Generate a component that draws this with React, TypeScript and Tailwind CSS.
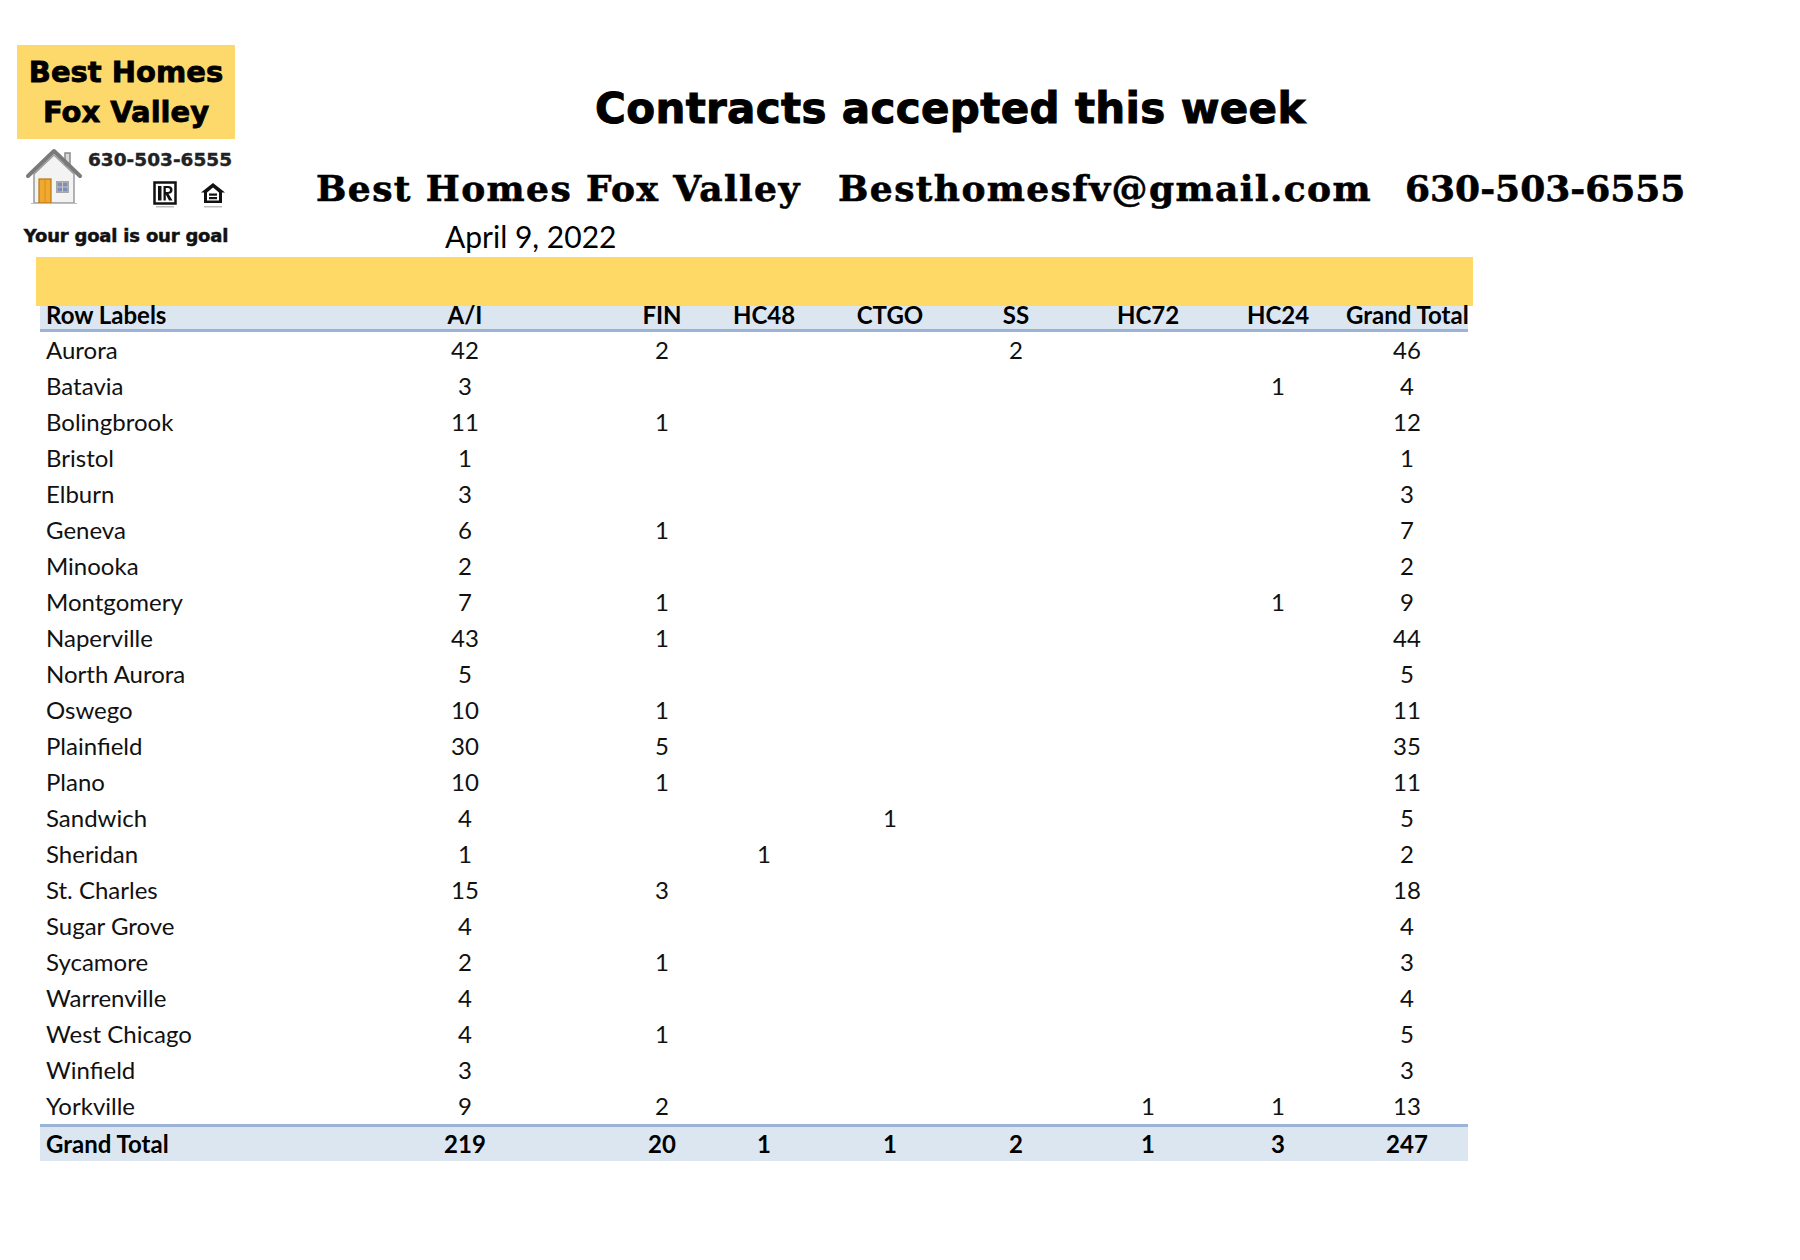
import React from "react"

const columns = ["A/I", "FIN", "HC48", "CTGO", "SS", "HC72", "HC24", "Grand Total"]

// label, A/I, FIN, HC48, CTGO, SS, HC72, HC24, Grand Total
const rows: [string, ...(number | null)[]][] = [
  ["Aurora", 42, 2, null, null, 2, null, null, 46],
  ["Batavia", 3, null, null, null, null, null, 1, 4],
  ["Bolingbrook", 11, 1, null, null, null, null, null, 12],
  ["Bristol", 1, null, null, null, null, null, null, 1],
  ["Elburn", 3, null, null, null, null, null, null, 3],
  ["Geneva", 6, 1, null, null, null, null, null, 7],
  ["Minooka", 2, null, null, null, null, null, null, 2],
  ["Montgomery", 7, 1, null, null, null, null, 1, 9],
  ["Naperville", 43, 1, null, null, null, null, null, 44],
  ["North Aurora", 5, null, null, null, null, null, null, 5],
  ["Oswego", 10, 1, null, null, null, null, null, 11],
  ["Plainfield", 30, 5, null, null, null, null, null, 35],
  ["Plano", 10, 1, null, null, null, null, null, 11],
  ["Sandwich", 4, null, null, 1, null, null, null, 5],
  ["Sheridan", 1, null, 1, null, null, null, null, 2],
  ["St. Charles", 15, 3, null, null, null, null, null, 18],
  ["Sugar Grove", 4, null, null, null, null, null, null, 4],
  ["Sycamore", 2, 1, null, null, null, null, null, 3],
  ["Warrenville", 4, null, null, null, null, null, null, 4],
  ["West Chicago", 4, 1, null, null, null, null, null, 5],
  ["Winfield", 3, null, null, null, null, null, null, 3],
  ["Yorkville", 9, 2, null, null, null, 1, 1, 13],
]

const totals = [219, 20, 1, 1, 2, 1, 3, 247]

const gridCols = "grid grid-cols-[260px_330px_64px_140px_112px_140px_124px_136px_122px]"

function HouseIcon() {
  return (
    <svg width="58" height="58" viewBox="0 0 58 58">
      {/* chimney */}
      <rect x="40" y="6" width="5" height="12" fill="#d9d9d9" stroke="#8a8a8a" strokeWidth="1.5" />
      {/* walls */}
      <path d="M9 27 L29 8 L49 27 V56 H9 Z" fill="#f3f3f3" stroke="#9a9a9a" strokeWidth="1.5" />
      {/* roof */}
      <path d="M3 29 L29 4 L55 29" fill="none" stroke="#7a7a7a" strokeWidth="4" strokeLinejoin="round" strokeLinecap="round" />
      {/* door */}
      <rect x="14" y="32" width="12" height="24" fill="#f0a92e" stroke="#b77712" strokeWidth="1.2" />
      <line x1="20" y1="33" x2="20" y2="55" stroke="#d88e1c" strokeWidth="1" />
      {/* window */}
      <rect x="32" y="35" width="11" height="10" fill="#7d8fb8" stroke="#a7a7a7" strokeWidth="2" />
      <line x1="37.5" y1="35" x2="37.5" y2="45" stroke="#c8c8c8" strokeWidth="1" />
      <line x1="32" y1="40" x2="43" y2="40" stroke="#c8c8c8" strokeWidth="1" />
      <line x1="6" y1="56.5" x2="52" y2="56.5" stroke="#bdbdbd" strokeWidth="1" />
    </svg>
  )
}

function RealtorIcon() {
  return (
    <svg width="26" height="28" viewBox="0 0 26 28">
      <rect x="1.5" y="1.5" width="21" height="21" fill="#fff" stroke="#111" strokeWidth="2.5" />
      <rect x="5" y="5" width="3.5" height="14.5" fill="#111" />
      <path d="M10.5 5 H15 Q19.5 5 19.5 9 Q19.5 12.5 15.5 12.8 L19.5 19.5 H16 L12.8 13.5 V19.5 H10.5 Z" fill="#111" />
      <path d="M12.8 7 V11 H15 Q17 11 17 9 Q17 7 15 7 Z" fill="#fff" />
      <rect x="3" y="25" width="18" height="1.5" fill="#bdbdbd" />
    </svg>
  )
}

function EqualHousingIcon() {
  return (
    <svg width="28" height="28" viewBox="0 0 28 28">
      <path d="M14 2 L26 11.5 H23 V22 H5 V11.5 H2 Z" fill="#111" />
      <path d="M14 6.5 L20 11.5 V19.5 H8 V11.5 Z" fill="#fff" />
      <rect x="10" y="12.5" width="8" height="2.2" fill="#111" />
      <rect x="10" y="16" width="8" height="2.2" fill="#111" />
      <rect x="5" y="25" width="18" height="1.5" fill="#bdbdbd" />
    </svg>
  )
}

function Logo() {
  return (
    <div className="ml-[17px] mt-[45px] w-[218px] flex flex-col font-['DejaVu_Sans',sans-serif] font-bold text-black [-webkit-text-stroke:0.8px_black]">
      <div className="h-[94px] bg-[#fdd96c] pt-[7px] flex flex-col items-center whitespace-nowrap">
        <div className="text-[29px] leading-[40px]">Best Homes</div>
        <div className="text-[29px] leading-[40px]">Fox Valley</div>
      </div>
      <div className="mt-[8px] flex">
        <div className="ml-[8px]">
          <HouseIcon />
        </div>
        <div className="ml-[5px] flex flex-col">
          <div className="text-[18.5px] leading-[22px] mt-[2px] text-[#222] [-webkit-text-stroke:0.4px_#222] whitespace-nowrap">
            630-503-6555
          </div>
          <div className="mt-[10px] ml-[65px] flex gap-[20px]">
            <RealtorIcon />
            <EqualHousingIcon />
          </div>
        </div>
      </div>
      <div className="mt-[17px] text-center text-[18px] leading-[20px] tracking-[-0.2px] text-[#111] whitespace-nowrap [-webkit-text-stroke:0.5px_#111]">
        Your goal is our goal
      </div>
    </div>
  )
}

function Cell({ children }: { children?: React.ReactNode }) {
  return <div className="text-center whitespace-nowrap">{children}</div>
}

export default function App() {
  return (
    <div className="min-h-[1260px] w-[1800px] bg-white text-[#111]">
      <div className="flex h-[257px]">
        <Logo />
        <div className="flex flex-col">
          <h1 className="mt-[88px] pl-[360px] text-[42px] leading-[42px] font-bold font-['DejaVu_Sans',sans-serif] tracking-[0.35px] text-black whitespace-nowrap [-webkit-text-stroke:1px_black]">
            Contracts accepted this week
          </h1>
          <div className="mt-[40px] pl-[81px] flex text-[36px] leading-[36px] font-bold font-['DejaVu_Serif',serif] text-black whitespace-nowrap [-webkit-text-stroke:0.6px_black]">
            <span className="w-[522px] tracking-[1.4px]">Best Homes Fox Valley</span>
            <span className="w-[567px] tracking-[1.4px]">Besthomesfv@gmail.com</span>
            <span>630-503-6555</span>
          </div>
          <div className="mt-[15px] pl-[210px] text-[30px] leading-[30px] font-['Lato',sans-serif] text-black">
            April 9, 2022
          </div>
        </div>
      </div>

      <div className="ml-[36px] w-[1437px] h-[49px] bg-[#ffd966]" />

      <div className="ml-[40px] w-[1428px] font-['Lato',sans-serif] text-[24px]">
        <div className={`${gridCols} h-[26px] bg-[#dce6f1] border-b-[3px] border-[#9bb3d7] leading-[17px] font-bold text-black`}>
          <div className="pl-[6px]">Row Labels</div>
          {columns.map((c) => (
            <Cell key={c}>{c}</Cell>
          ))}
        </div>

        {rows.map(([label, ...vals]) => (
          <div key={label} className={`${gridCols} h-[36px] leading-[36px]`}>
            <div className="pl-[6px] whitespace-nowrap">{label}</div>
            {vals.map((v, i) => (
              <Cell key={i}>{v ?? ""}</Cell>
            ))}
          </div>
        ))}

        <div className={`${gridCols} h-[37px] bg-[#dce6f1] border-t-[3px] border-[#9bb3d7] leading-[34px] font-bold text-black`}>
          <div className="pl-[6px]">Grand Total</div>
          {totals.map((v, i) => (
            <Cell key={i}>{v}</Cell>
          ))}
        </div>
      </div>
    </div>
  )
}
